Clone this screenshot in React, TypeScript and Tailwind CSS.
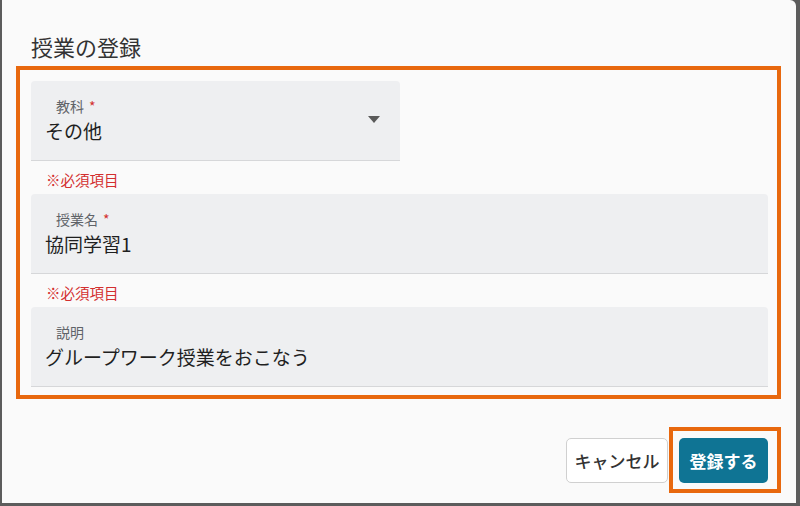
const font = { fontFamily: '"Noto Sans CJK JP", "Noto Sans", sans-serif' };

function Field({ label, value, required, select }: { label: string; value: string; required?: boolean; select?: boolean }) {
    return (
        <div
            className={`flex items-center h-[80px] bg-[#eeeff1] rounded-t-[4px] border-b border-[#d6d7d9] ${select ? "w-[369px]" : "w-full"}`}
        >
            <div className="flex-1 flex flex-col pt-[15px] self-start">
                <div className="pl-[25px] text-[14px] leading-[20px] text-[#5f6368]">
                    {label}
                    {required && <span className="text-[#d32f2f] ml-[5px]">*</span>}
                </div>
                <div className="pl-[14px] text-[19px] leading-[30px] text-[#1f1f1f]">{value}</div>
            </div>
            {select && (
                <svg width="12" height="7" viewBox="0 0 12 7" className="mr-[20px] mb-[2px]">
                    <path d="M0 0 L12 0 L6 7 Z" fill="#5a5a5a" />
                </svg>
            )}
        </div>
    );
}

function Helper() {
    return <div className="h-[33px] pt-[8px] pl-[15px] text-[14.5px] leading-[22px] text-[#d32f2f]">※必須項目</div>;
}

export default function App() {
    return (
        <div className="w-[800px] h-[506px] bg-[#5c5c5c] overflow-hidden" style={font}>
            <div className="ml-[2px] w-[794px] h-[503px] bg-[#fafafa] rounded-tr-[6px] flex flex-col">
                {/* Title */}
                <h2 className="pt-[30px] pl-[29px] text-[22px] leading-[32px] text-[#333]">授業の登録</h2>

                {/* Form */}
                <div className="mt-[4px] ml-[14px] w-[765px] border-4 border-[#e8680e] pt-[11px] pl-[11px] pr-[9px] pb-[8px]">
                    <Field label="教科" value="その他" required select />
                    <Helper />
                    <Field label="授業名" value="協同学習1" required />
                    <Helper />
                    <Field label="説明" value="グループワーク授業をおこなう" />
                </div>

                {/* Actions */}
                <div className="flex justify-end items-start mt-[28px] pr-[15px]">
                    <button className="mt-[11px] w-[102px] h-[45px] bg-white border border-[#d0d0d0] rounded-[5px] text-[17px] font-medium text-[#333]">
                        キャンセル
                    </button>
                    <div className="ml-[1px] border-4 border-[#e8680e] pt-[7px] pl-[6px] pr-[9px] pb-[6px]">
                        <button className="w-[89px] h-[45px] bg-[#0f7494] rounded-[5px] text-[17px] font-bold text-white">
                            登録する
                        </button>
                    </div>
                </div>
            </div>
        </div>
    );
}
